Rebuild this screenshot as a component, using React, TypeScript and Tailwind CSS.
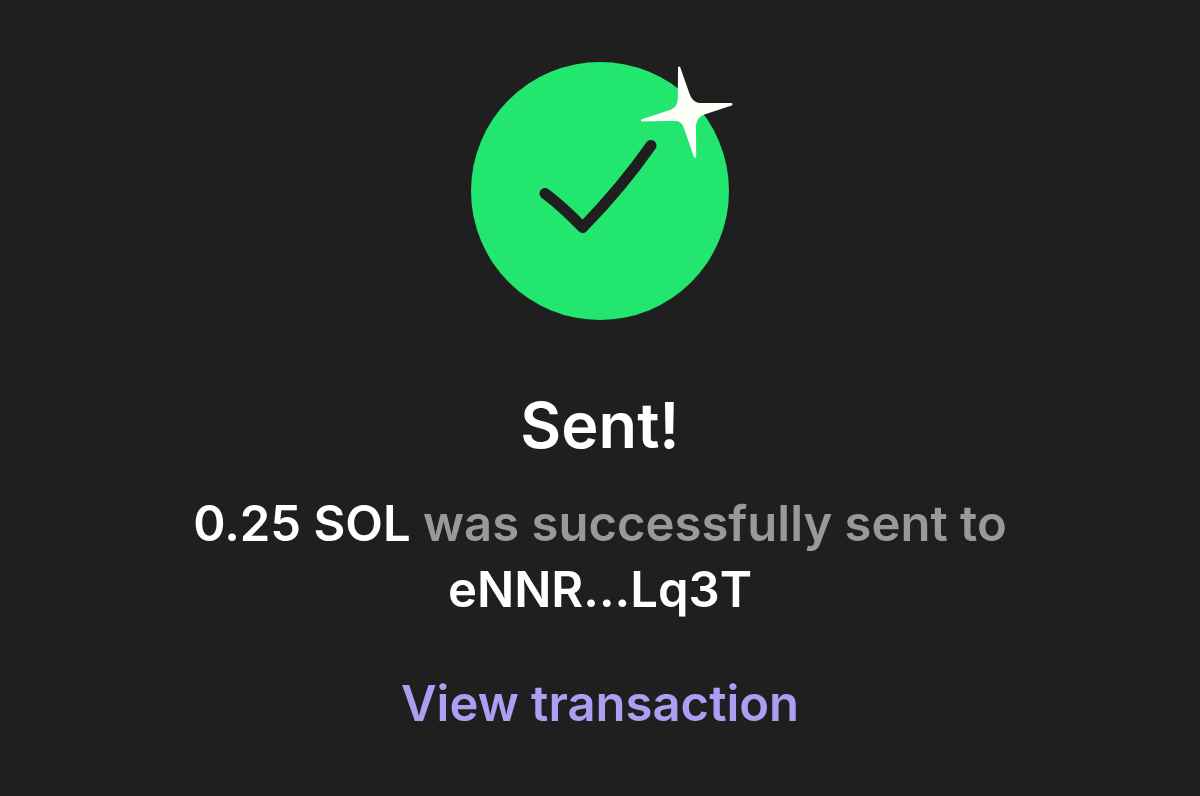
interface StatusIconProps {
  className?: string;
}

function SuccessIcon({ className }: StatusIconProps) {
  return (
    <svg viewBox="0 0 264 260" fill="none" aria-hidden="true" className={className}>
      <circle cx="130" cy="130" r="129" fill="#22E66E" />
      {/* Check mark */}
      <path
        d="M75 132.5 Q92 145 112.7 166.5 Q152 126 181 84.5"
        stroke="#1F1F1F"
        strokeWidth="11"
        strokeLinecap="round"
        strokeLinejoin="round"
      />
      {/* Sparkle */}
      <path
        d="M209.2 6.8 L218.3 33 Q221.5 42.8 229.5 43.2 L261.3 43.3 L234 52.3 Q225.3 55.5 224.8 65 L225 95.5 L215.3 67 Q212.5 58.8 205 58.6 L172.3 59.3 L201 49.8 Q208.5 47.3 209 38 Z"
        fill="#FFFFFA"
        stroke="#FFFFFA"
        strokeWidth="2.4"
        strokeLinejoin="round"
      />
    </svg>
  );
}

export default function App() {
  return (
    <main className="flex min-h-screen flex-col items-center bg-[#1F1F1F] px-6 pt-[61px] pb-12 text-center font-['Inter',sans-serif] font-semibold text-white">
      <SuccessIcon className="ml-1 w-[264px]" />

      <h1 className="mt-[66px] text-[63px] leading-[76px] font-semibold">Sent!</h1>

      <p className="mt-7 max-w-[860px] text-[49px] leading-[66px] text-[#999999]">
        <span className="text-white">0.25 SOL</span> was successfully sent to
        <br />
        <span className="text-white">eNNR...Lq3T</span>
      </p>

      <a href="#transaction" className="mt-12 text-[49px] leading-[66px] text-[#AB9FF2]">
        View transaction
      </a>
    </main>
  );
}
